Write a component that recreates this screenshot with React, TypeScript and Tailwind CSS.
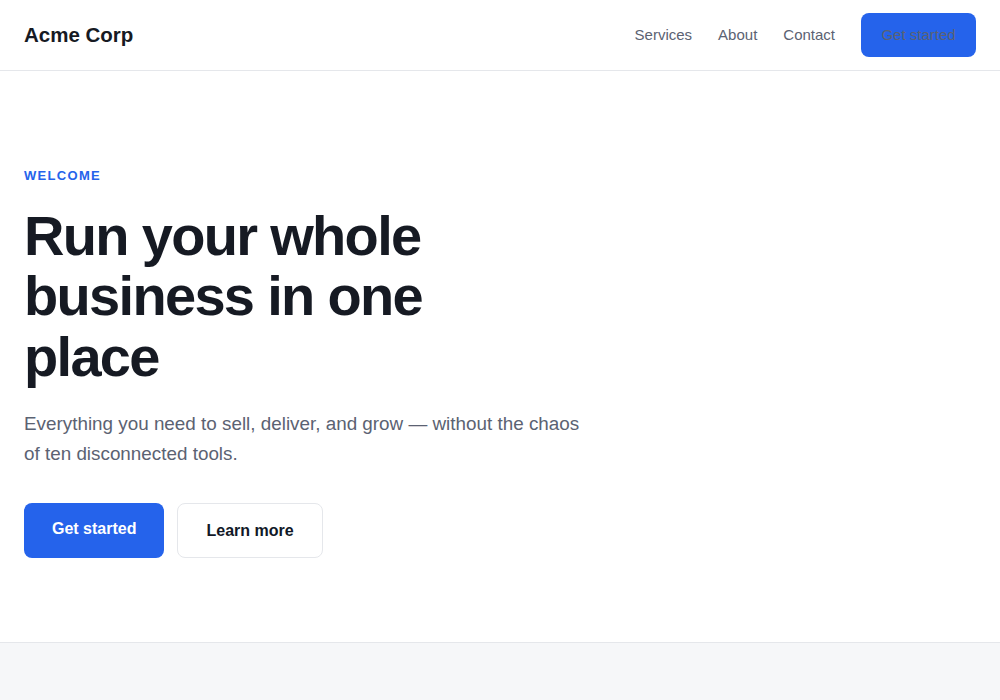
import React from "react";

export default function App() {
  return (
    <div className="min-h-screen bg-white text-[#111827]" style={{ fontFamily: '"Liberation Sans", Arial, sans-serif' }}>
      <header className="h-[71px] border-b border-[#e5e7eb] flex items-center justify-between px-6">
        <div className="text-[20.5px] font-bold text-[#161a23]">Acme Corp</div>
        <nav className="flex items-center">
          <a className="text-[15px] text-[#5b6272] mr-[26px]">Services</a>
          <a className="text-[15px] text-[#5b6272] mr-[26px]">About</a>
          <a className="text-[15px] text-[#5b6272] mr-[26px]">Contact</a>
          <button className="h-[44px] w-[115px] rounded-lg bg-[#2563eb] text-[15px] text-[#5b6272]">Get started</button>
        </nav>
      </header>
      <section className="h-[571px] px-6 pt-[95px]">
        <div className="text-[13px] font-bold tracking-widest text-[#2563eb] leading-5">WELCOME</div>
        <h1 className="mt-[20px] max-w-lg text-[56px] font-bold tracking-[-0.03em] leading-[1.08] text-[#161a23]">
          Run your whole business in one place
        </h1>
        <p className="mt-[22px] max-w-[565px] text-[18.85px] leading-[1.59] text-[#5b6272]">
          Everything you need to sell, deliver, and grow — without the chaos of ten disconnected tools.
        </p>
        <div className="mt-[34px] flex gap-[13px]">
          <button className="h-[55px] px-7 rounded-lg bg-[#2563eb] text-white text-[16px] font-bold pb-[3px]">Get started</button>
          <button className="h-[55px] px-7 rounded-lg border border-[#e5e7eb] bg-white text-[#111827] text-[16px] font-bold">Learn more</button>
        </div>
      </section>
      <section className="h-[58px] border-t border-[#e5e7eb] bg-[#f6f7f9]" />
    </div>
  );
}
